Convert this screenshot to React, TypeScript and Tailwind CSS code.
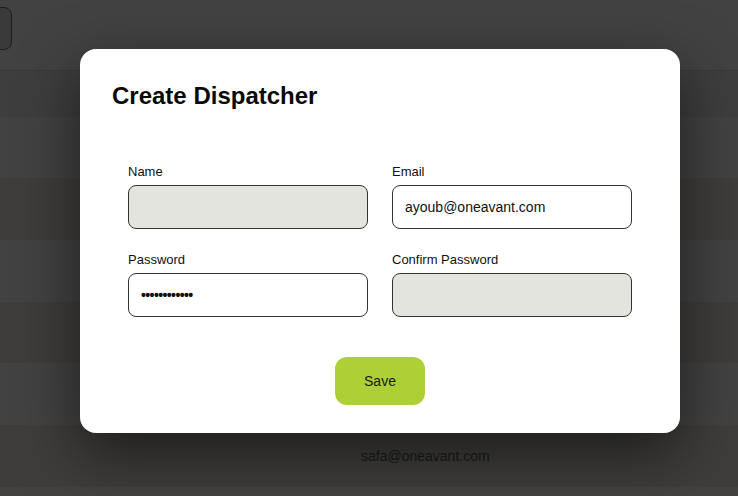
import React from "react";

const rows = [
  { h: "h-[46px]", c: "bg-[#3e3e3e]", t: "" },
  { h: "h-[61px]", c: "bg-[#424242]", t: "" },
  { h: "h-[62px]", c: "bg-[#3e3d3b]", t: "" },
  { h: "h-[62px]", c: "bg-[#424242]", t: "" },
  { h: "h-[61px]", c: "bg-[#3e3d3b]", t: "" },
  { h: "h-[62px]", c: "bg-[#424242]", t: "" },
  { h: "h-[62px]", c: "bg-[#3e3d3b]", t: "safa@oneavant.com" },
  { h: "h-[30px]", c: "bg-[#424242]", t: "" },
];

function Field({ label, value, filled, password }: { label: string; value?: string; filled?: boolean; password?: boolean }) {
  return (
    <div className="flex flex-col">
      <div className="text-[13px] leading-[16px] text-[#111] mb-[5px]">{label}</div>
      <div
        className={`h-[44px] rounded-[8px] border border-[#333] flex items-center px-[12px] text-[14px] text-[#111] ${filled ? "bg-[#e4e4df]" : "bg-white"}`}
      >
        {password ? <span className="tracking-[-0.6px] text-[14px] font-bold">••••••••••••</span> : value}
      </div>
    </div>
  );
}

export default function App() {
  return (
    <div className="relative w-[738px] h-[496px] overflow-hidden bg-[#414141]" style={{ fontFamily: '"Liberation Sans", Arial, sans-serif' }}>
      <div className="h-[71px] border-b border-[#393939] bg-[#424242] flex items-start">
        <div className="mt-[7px] ml-[-20px] w-[32px] h-[43px] rounded-[8px] border border-[#1c1c1c] bg-[#3a3a3a]" />
      </div>
      {rows.map((r, i) => (
        <div key={i} className={`${r.h} ${r.c} flex items-center`}>
          {r.t && <span className="ml-[361px] text-[14px] text-[#1a1a1a]">{r.t}</span>}
        </div>
      ))}
      <div className="absolute left-[80px] top-[49px] w-[600px] h-[384px] rounded-[16px] bg-white shadow-[0_20px_60px_rgba(0,0,0,0.55)] px-[32px] pt-[32px]">
        <h2 className="text-[24px] leading-[30px] font-bold text-[#0a0a0a] tracking-[0px]">Create Dispatcher</h2>
        <div className="mt-[53px] mx-[16px] grid grid-cols-2 gap-x-[24px] gap-y-[23px]">
          <Field label="Name" filled />
          <Field label="Email" value="ayoub@oneavant.com" />
          <Field label="Password" password />
          <Field label="Confirm Password" filled />
        </div>
        <div className="flex justify-center mt-[40px]">
          <button className="w-[90px] h-[48px] rounded-[12px] bg-[#add036] text-[14px] text-[#1a1a1a]">Save</button>
        </div>
      </div>
    </div>
  );
}
